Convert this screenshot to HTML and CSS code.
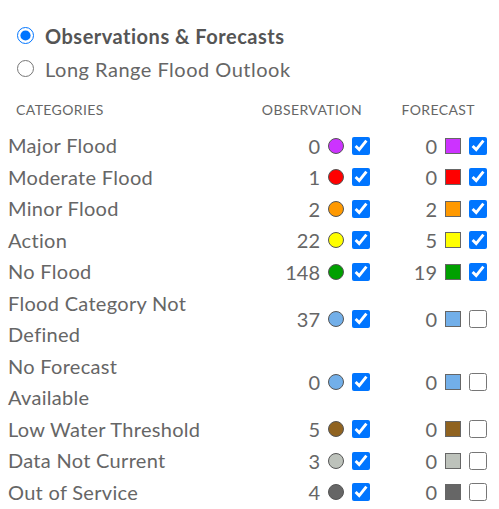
FILE: index.html
```html
<!DOCTYPE html>
<html>
<head>
<meta charset="utf-8">
<link rel="stylesheet" href="styles.css">
</head>
<body>
<div class="panel">
  <div class="modes">
    <label class="mode mode-active"><input type="radio" name="mode" checked> Observations &amp; Forecasts</label>
    <label class="mode"><input type="radio" name="mode"> Long Range Flood Outlook</label>
  </div>
  <div class="legend">
    <div class="hd hd-cat">CATEGORIES</div>
    <div class="hd hd-obs">OBSERVATION</div>
    <div class="hd hd-fc">FORECAST</div>

    <div class="cat">Major Flood</div>
    <div class="cell"><span class="num">0</span><span class="dot c-major"></span><input type="checkbox" checked></div>
    <div class="cell"><span class="num">0</span><span class="sq c-major"></span><input type="checkbox" checked></div>

    <div class="cat">Moderate Flood</div>
    <div class="cell"><span class="num">1</span><span class="dot c-mod"></span><input type="checkbox" checked></div>
    <div class="cell"><span class="num">0</span><span class="sq c-mod"></span><input type="checkbox" checked></div>

    <div class="cat">Minor Flood</div>
    <div class="cell"><span class="num">2</span><span class="dot c-minor"></span><input type="checkbox" checked></div>
    <div class="cell"><span class="num">2</span><span class="sq c-minor"></span><input type="checkbox" checked></div>

    <div class="cat">Action</div>
    <div class="cell"><span class="num">22</span><span class="dot c-action"></span><input type="checkbox" checked></div>
    <div class="cell"><span class="num">5</span><span class="sq c-action"></span><input type="checkbox" checked></div>

    <div class="cat">No Flood</div>
    <div class="cell"><span class="num">148</span><span class="dot c-none"></span><input type="checkbox" checked></div>
    <div class="cell"><span class="num">19</span><span class="sq c-none"></span><input type="checkbox" checked></div>

    <div class="cat">Flood Category Not Defined</div>
    <div class="cell"><span class="num">37</span><span class="dot c-undef"></span><input type="checkbox" checked></div>
    <div class="cell"><span class="num">0</span><span class="sq c-undef"></span><input type="checkbox"></div>

    <div class="cat">No Forecast Available</div>
    <div class="cell"><span class="num">0</span><span class="dot c-undef"></span><input type="checkbox" checked></div>
    <div class="cell"><span class="num">0</span><span class="sq c-undef"></span><input type="checkbox"></div>

    <div class="cat">Low Water Threshold</div>
    <div class="cell"><span class="num">5</span><span class="dot c-low"></span><input type="checkbox" checked></div>
    <div class="cell"><span class="num">0</span><span class="sq c-low"></span><input type="checkbox"></div>

    <div class="cat">Data Not Current</div>
    <div class="cell"><span class="num">3</span><span class="dot c-old"></span><input type="checkbox" checked></div>
    <div class="cell"><span class="num">0</span><span class="sq c-old"></span><input type="checkbox"></div>

    <div class="cat">Out of Service</div>
    <div class="cell"><span class="num">4</span><span class="dot c-oos"></span><input type="checkbox" checked></div>
    <div class="cell"><span class="num">0</span><span class="sq c-oos"></span><input type="checkbox"></div>
  </div>
</div>
</body>
</html>
```
FILE: styles.css
```css
html, body {
  margin: 0;
  background: #ffffff;
}
body {
  padding: 0 12px 0 8px;
  font-family: Lato, "Liberation Sans", sans-serif;
  color: #666666;
}
.panel {
  padding-top: 19px;
}
.modes {
  display: flex;
  flex-direction: column;
  padding-left: 9px;
}
.mode {
  display: flex;
  align-items: center;
  gap: 11px;
  height: 33px;
  font-size: 20px;
  letter-spacing: 0.5px;
  color: #666666;
}
.mode-active {
  font-weight: 700;
  color: #555555;
}
.mode input {
  margin: 0;
  width: 17px;
  height: 17px;
}
.legend {
  display: grid;
  grid-template-columns: 193px 1fr 117px;
  align-items: center;
  margin-top: 8px;
}
.hd {
  font-size: 14px;
  letter-spacing: 0.4px;
  color: #666666;
  height: 37px;
  line-height: 33px;
  align-self: start;
}
.hd-cat { padding-left: 8px; }
.hd-obs { text-align: right; padding-right: 8px; }
.hd-fc { text-align: right; padding-right: 12px; }
.cat {
  font-size: 20px;
  letter-spacing: 0.3px;
  line-height: 31.5px;
  color: #666666;
}
.cell {
  display: flex;
  align-items: center;
  justify-content: flex-end;
  gap: 8px;
  font-size: 20px;
}
.num {
  color: #666666;
}
.dot {
  width: 14px;
  height: 14px;
  border-radius: 50%;
  border: 1px solid #555555;
}
.sq {
  width: 14px;
  height: 14px;
  border: 1px solid #666666;
}
.cell input {
  margin: 0;
  width: 18px;
  height: 18px;
}
.c-major { background: #cc33ff; }
.c-mod { background: #ff0000; }
.c-minor { background: #ff9900; }
.c-action { background: #ffff00; }
.c-none { background: #00a000; }
.c-undef { background: #72afe9; }
.c-low { background: #906320; }
.c-old { background: #bdc2bb; }
.c-oos { background: #666666; }
```
